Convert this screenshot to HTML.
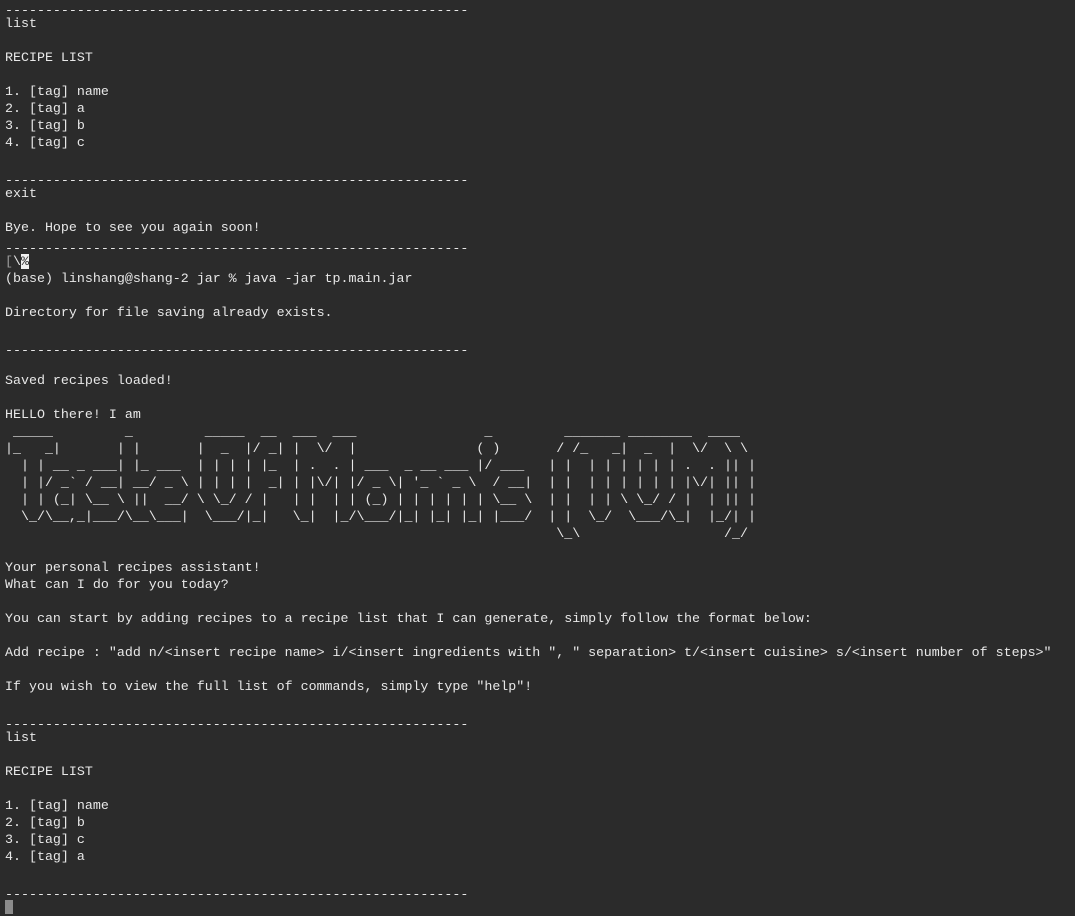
<!DOCTYPE html>
<html><head><meta charset="utf-8"><style>
html,body{margin:0;padding:0;background:#2b2b2b;width:1075px;height:910px;overflow:hidden}
pre{position:absolute;left:5px;top:-2.5px;margin:0;font-family:"Liberation Mono",monospace;font-size:13.32px;line-height:17px;color:#e8e8e8;white-space:pre}
.d{position:relative;top:4px}
.dim{color:#9a9a9a}
.inv{background:#f0f0f0;color:#2b2b2b}
.cur{display:inline-block;width:8px;height:14px;background:#8c8c8c;vertical-align:-3px}
</style></head><body><pre><span class="d">----------------------------------------------------------</span>
list

RECIPE LIST

1. [tag] name
2. [tag] a
3. [tag] b
4. [tag] c

<span class="d">----------------------------------------------------------</span>
exit

Bye. Hope to see you again soon!
<span class="d">----------------------------------------------------------</span>
<span class="dim">[</span>\<span class="inv">%</span>
(base) linshang@shang-2 jar % java -jar tp.main.jar

Directory for file saving already exists.

<span class="d">----------------------------------------------------------</span>

Saved recipes loaded!

HELLO there! I am
 _____         _         _____  __  ___  ___                _         _______ ________  ____
|_   _|       | |       |  _  |/ _| |  \/  |               ( )       / /_   _|  _  |  \/  \ \
  | | __ _ ___| |_ ___  | | | | |_  | .  . | ___  _ __ ___ |/ ___   | |  | | | | | | .  . || |
  | |/ _` / __| __/ _ \ | | | |  _| | |\/| |/ _ \| '_ ` _ \  / __|  | |  | | | | | | |\/| || |
  | | (_| \__ \ ||  __/ \ \_/ / |   | |  | | (_) | | | | | | \__ \  | |  | | \ \_/ / |  | || |
  \_/\__,_|___/\__\___|  \___/|_|   \_|  |_/\___/|_| |_| |_| |___/  | |  \_/  \___/\_|  |_/| |
                                                                     \_\                  /_/

Your personal recipes assistant!
What can I do for you today?

You can start by adding recipes to a recipe list that I can generate, simply follow the format below:

Add recipe : "add n/&lt;insert recipe name&gt; i/&lt;insert ingredients with ", " separation&gt; t/&lt;insert cuisine&gt; s/&lt;insert number of steps&gt;"

If you wish to view the full list of commands, simply type "help"!

<span class="d">----------------------------------------------------------</span>
list

RECIPE LIST

1. [tag] name
2. [tag] b
3. [tag] c
4. [tag] a

<span class="d">----------------------------------------------------------</span>
<span class="cur"></span></pre></body></html>
